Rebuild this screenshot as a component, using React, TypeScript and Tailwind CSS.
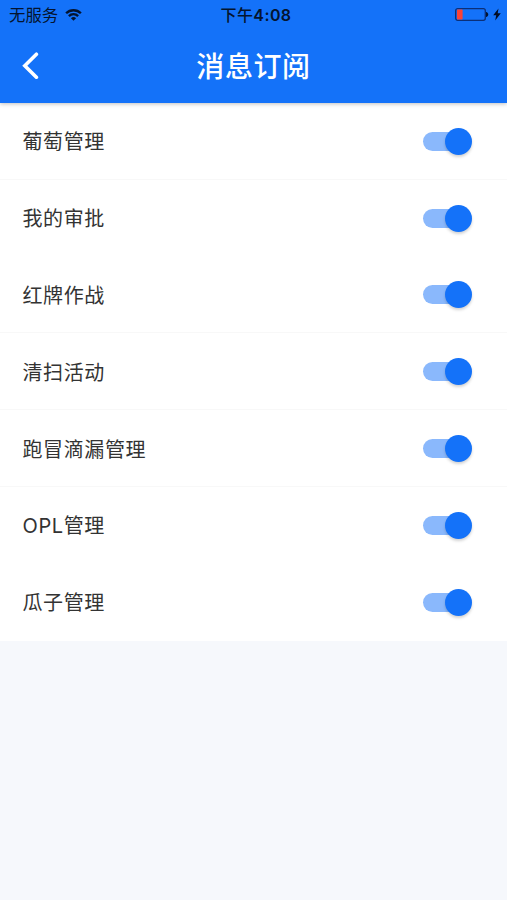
import { useState } from 'react'

const topics = [
  { id: 'grape', label: '葡萄管理', line: true },
  { id: 'approval', label: '我的审批', line: false },
  { id: 'redcard', label: '红牌作战', line: true },
  { id: 'cleaning', label: '清扫活动', line: true },
  { id: 'leak', label: '跑冒滴漏管理', line: true },
  { id: 'opl', label: 'OPL管理', line: false },
  { id: 'melon', label: '瓜子管理', line: false },
]

function StatusBar() {
  return (
    <div className="grid grid-cols-3 items-center h-[29px] pl-[9px] pr-[6px] text-[#04142f]">
      <div className="flex items-center gap-[7px]">
        <span className="pt-px text-[16.4px] leading-none">无服务</span>
        <svg width="17" height="13" viewBox="0 0 18 13" fill="none" stroke="currentColor" strokeWidth="2.5">
          <path d="M1.2 5.2a11 11 0 0 1 15.6 0" />
          <path d="M4.1 8.2a6.9 6.9 0 0 1 9.8 0" />
          <path d="M9 13 6.3 10.4a3.7 3.7 0 0 1 5.4 0z" fill="currentColor" stroke="none" />
        </svg>
      </div>
      <div className="pl-[2px] text-center text-[16px] leading-none font-semibold whitespace-nowrap tracking-[0.4px]">
        <span className="font-medium">下午</span>4:08
      </div>
      <div className="flex items-center justify-end gap-[4px]">
        <svg width="34" height="13" viewBox="0 0 34 13">
          <rect x="0.7" y="0.7" width="29.6" height="11.6" rx="2" fill="none" stroke="#0b2f78" strokeWidth="1.3" />
          <rect x="2" y="1.6" width="5.6" height="9.8" rx="0.6" fill="#fb4237" />
          <path d="M31 4c3 .5 3 4.5 0 5z" fill="#04142f" />
        </svg>
        <svg width="8" height="13" viewBox="0 0 8 13" fill="#020d24">
          <path d="M5.5 0.5 0.2 7.3h3L2.2 12.5 7.8 5.2H4.7z" />
        </svg>
      </div>
    </div>
  )
}

function Toggle({ on, label, onChange }: { on: boolean; label: string; onChange: () => void }) {
  return (
    <button
      type="button"
      role="switch"
      aria-checked={on}
      aria-label={label}
      onClick={onChange}
      className="flex items-center w-[49px] h-[27px]"
    >
      <span className={`flex items-center w-[47px] h-[19px] rounded-full ${on ? 'justify-end bg-[#8ab8fc]' : 'justify-start bg-neutral-300'}`}>
        <span
          className={`h-[27px] w-[27px] shrink-0 rounded-full shadow-[0_2px_3px_rgba(0,0,0,0.18)] ${
            on ? '-mr-[2px] bg-[#1472f9]' : 'bg-white'
          }`}
        />
      </span>
    </button>
  )
}

export default function App() {
  const [off, setOff] = useState<string[]>([])

  const toggle = (id: string) => {
    setOff(prev => (prev.includes(id) ? prev.filter(x => x !== id) : [...prev, id]))
  }

  return (
    <div className="min-h-screen bg-[#f6f8fc] font-[Inter,'Noto_Sans_CJK_SC',sans-serif]">
      <header className="relative h-[103px] bg-[#1472f9] shadow-[0_1px_4px_rgba(0,0,0,0.25)]">
        <StatusBar />
        <div className="grid grid-cols-3 items-center h-[74px] px-[22px]">
          <button type="button" aria-label="返回" className="w-fit">
            <svg width="18" height="28" viewBox="0 0 18 28" fill="none" stroke="#fff" strokeWidth="3.6" strokeLinecap="round">
              <path d="M14.4 2.2 2.8 13.7l11.6 11.5" />
            </svg>
          </button>
          <h1 className="pt-[2px] text-center text-[28px] leading-none font-medium tracking-[0.6px] whitespace-nowrap text-white">消息订阅</h1>
        </div>
      </header>

      <main className="bg-white">
        {topics.map(topic => (
          <div
            key={topic.id}
            className={`flex items-center justify-between h-[76.8px] pt-px pl-[22.5px] pr-[35px] border-b ${
              topic.line ? 'border-[#f8f8f8]' : 'border-transparent'
            }`}
          >
            <span className="pt-[2px] text-[20px] leading-none tracking-[0.6px] text-[#333]">{topic.label}</span>
            <Toggle on={!off.includes(topic.id)} label={topic.label} onChange={() => toggle(topic.id)} />
          </div>
        ))}
      </main>
    </div>
  )
}
